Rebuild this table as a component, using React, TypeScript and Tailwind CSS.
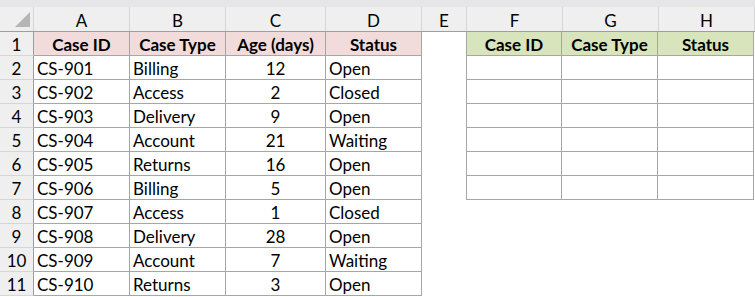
const cols = ["A", "B", "C", "D", "E", "F", "G", "H"];

const cases = [
  { id: "CS-901", type: "Billing", age: 12, status: "Open" },
  { id: "CS-902", type: "Access", age: 2, status: "Closed" },
  { id: "CS-903", type: "Delivery", age: 9, status: "Open" },
  { id: "CS-904", type: "Account", age: 21, status: "Waiting" },
  { id: "CS-905", type: "Returns", age: 16, status: "Open" },
  { id: "CS-906", type: "Billing", age: 5, status: "Open" },
  { id: "CS-907", type: "Access", age: 1, status: "Closed" },
  { id: "CS-908", type: "Delivery", age: 28, status: "Open" },
  { id: "CS-909", type: "Account", age: 7, status: "Waiting" },
  { id: "CS-910", type: "Returns", age: 3, status: "Open" },
];

const colWidths = ["w-[34px]", "w-[96px]", "w-[96px]", "w-[100px]", "w-[96px]", "w-[45px]", "w-[96px]", "w-[96px]", "w-[96px]"];

const RowHead = ({ n }: { n: number }) => (
  <div className="w-[34px] h-full flex items-center justify-center pt-[2px] bg-[#efefef] border-r border-r-[#9e9e9e] border-b border-b-[#d6d6d6]">
    {n}
  </div>
);

const Cell = ({
  children,
  w,
  className = "",
}: {
  children?: React.ReactNode;
  w: string;
  className?: string;
}) => (
  <div className={`${w} h-full flex items-center pt-[2px] border-r border-b border-[#a6a6a6] ${className}`}>
    {children}
  </div>
);

export default function App() {
  return (
    <div
      className="w-[755px] h-[297px] bg-white text-black text-[17px] leading-none overflow-hidden"
      style={{ fontFamily: "Lato, 'Open Sans', sans-serif" }}
    >
      {/* ribbon edge */}
      <div className="h-[7px] bg-[#e6e6e9]" />

      {/* column letters */}
      <div className="flex h-[25px] bg-[#efefef] border-b border-[#9e9e9e]">
        <div className="w-[34px] h-full relative border-r border-[#d6d6d6]">
          <svg className="absolute left-0 top-0" width="33" height="24" viewBox="0 0 33 24">
            <polygon points="15,20 30,5 30,20" fill="#b5b5b5" />
          </svg>
        </div>
        {cols.map((c, i) => (
          <div
            key={c}
            className={`${colWidths[i + 1]} h-full flex items-center justify-center pt-[2px] border-r border-[#d6d6d6]`}
          >
            {c}
          </div>
        ))}
      </div>

      {/* header row */}
      <div className="flex h-[24px]">
        <RowHead n={1} />
        <Cell w="w-[96px]" className="justify-center font-bold bg-[#f2dcdb]">Case ID</Cell>
        <Cell w="w-[96px]" className="justify-center font-bold bg-[#f2dcdb]">Case Type</Cell>
        <Cell w="w-[100px]" className="justify-center font-bold bg-[#f2dcdb]">Age (days)</Cell>
        <Cell w="w-[96px]" className="justify-center font-bold bg-[#f2dcdb]">Status</Cell>
        <div className="w-[44px]" />
        <Cell w="w-[96px]" className="justify-center font-bold bg-[#d8e4bc] border-l">Case ID</Cell>
        <Cell w="w-[96px]" className="justify-center font-bold bg-[#d8e4bc]">Case Type</Cell>
        <Cell w="w-[96px]" className="justify-center font-bold bg-[#d8e4bc]">Status</Cell>
      </div>

      {cases.map((r, i) => (
        <div key={r.id} className="flex h-[24px]">
          <RowHead n={i + 2} />
          <Cell w="w-[96px]" className="pl-[3px]">{r.id}</Cell>
          <Cell w="w-[96px]" className="pl-[3px]">{r.type}</Cell>
          <Cell w="w-[100px]" className="justify-center">{r.age}</Cell>
          <Cell w="w-[96px]" className="pl-[3px]">{r.status}</Cell>
          <div className="w-[44px]" />
          {i < 6 && (
            <>
              <Cell w="w-[96px]" className="border-l" />
              <Cell w="w-[96px]" />
              <Cell w="w-[96px]" />
            </>
          )}
        </div>
      ))}
    </div>
  );
}
